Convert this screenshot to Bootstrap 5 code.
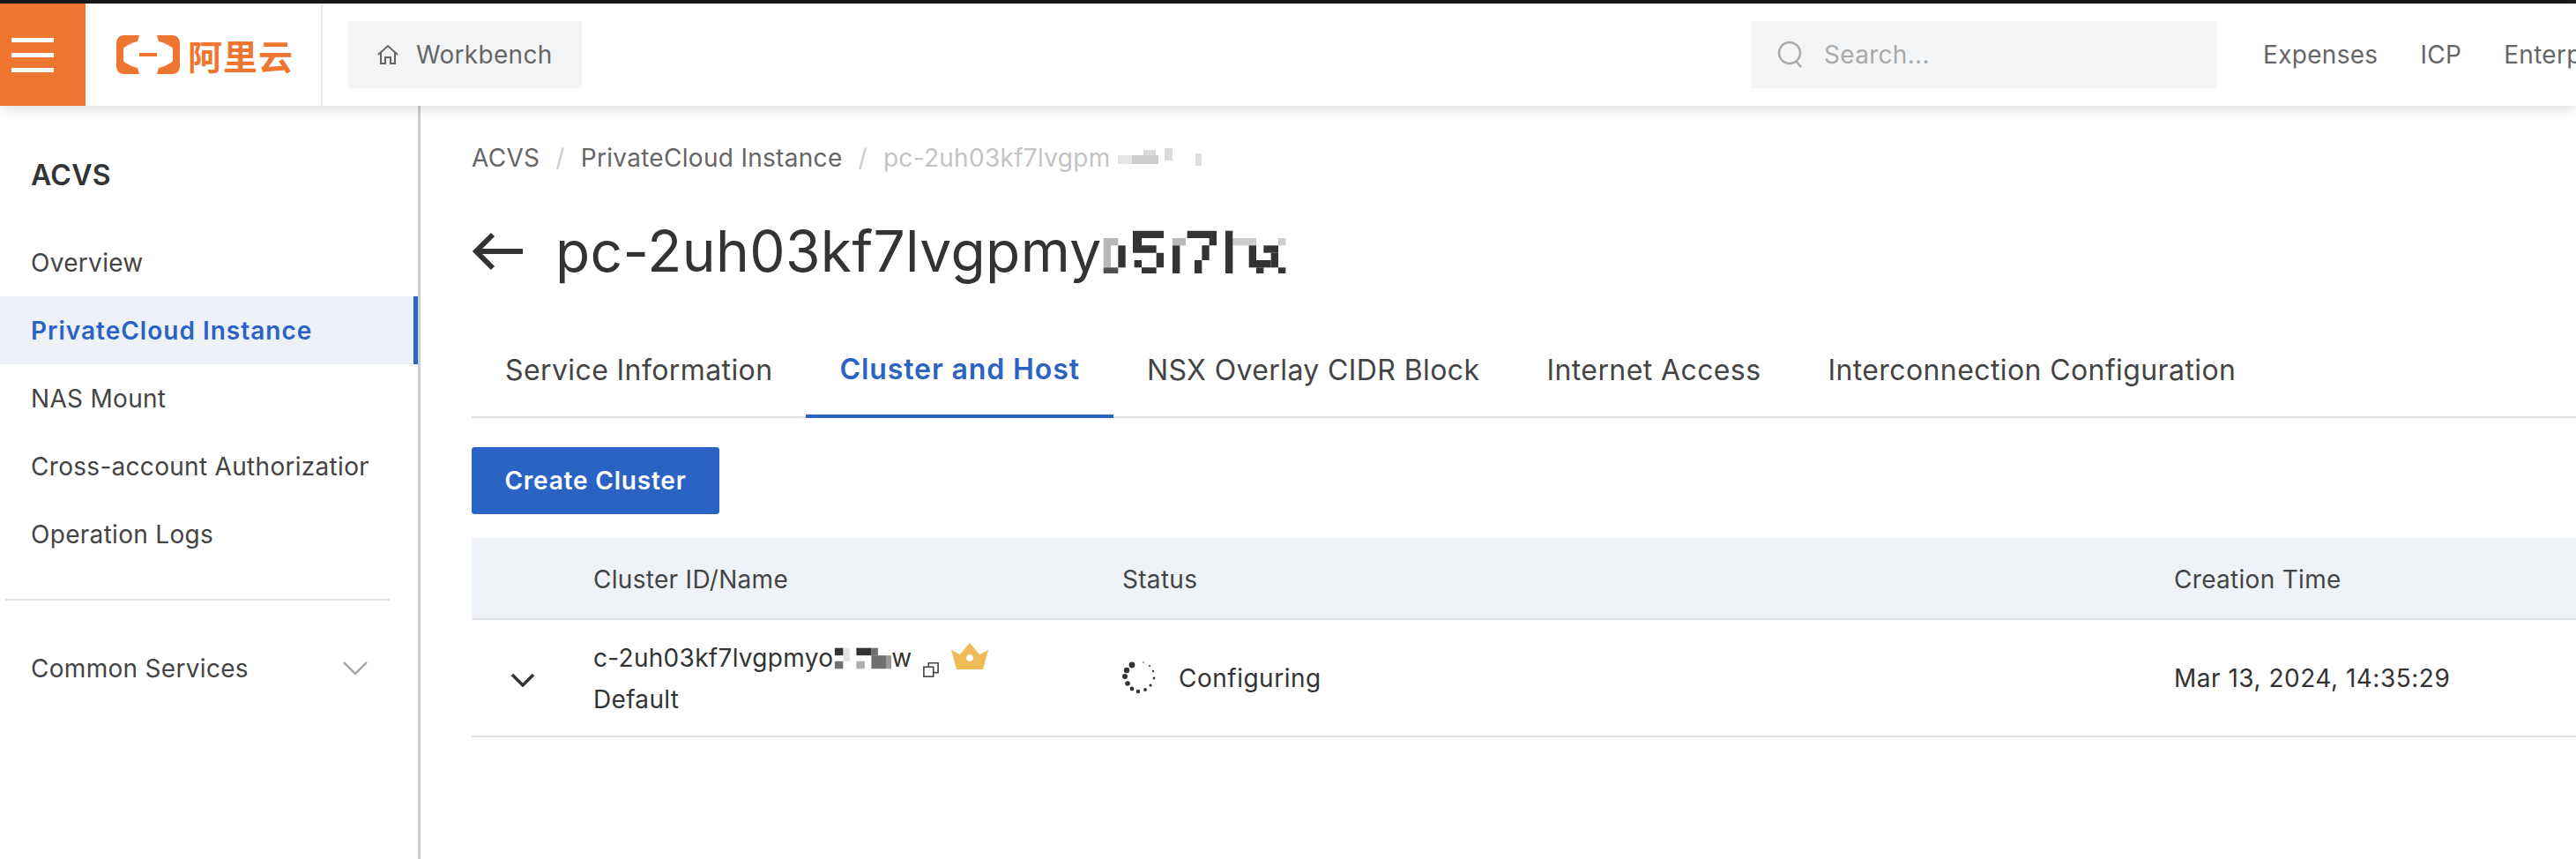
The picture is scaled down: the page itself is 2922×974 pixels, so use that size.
<!DOCTYPE html>
<html lang="en">
<head>
<meta charset="UTF-8">
<title>ACVS PrivateCloud Instance</title>
<link href="https://cdn.jsdelivr.net/npm/bootstrap@5.3.0/dist/css/bootstrap.min.css" rel="stylesheet">
<style>
    html, body { height: 100%; }
    body { font-family: Inter, Roboto, "Liberation Sans", sans-serif; color: #333; background: #fff; overflow: hidden; letter-spacing: .3px; }
    .top-strip { height: 4px; background: #1a1a1a; }
    .top-bar { height: 116px; background: #fff; box-shadow: 0 2px 14px rgba(0,0,0,.16); position: relative; z-index: 2; overflow: hidden; }
    .menu-box { width: 97px; flex: none; background: #ef7630; gap: 12px; padding-left: 13px; }
    .menu-box i { display: block; width: 48px; height: 5px; background: #fff; }
    .logo-box { width: 269px; flex: none; padding-left: 35px; border-right: 2px solid #e8eaec; gap: 9px; }
    .logo-text { font-family: "Noto Sans CJK SC", sans-serif; font-size: 39px; font-weight: 700; color: #ef7630; line-height: 1; letter-spacing: 1px; }
    .bench-btn { width: 265px; height: 76px; margin-left: 29px; background: #f3f4f6; border-radius: 3px; color: #666; font-size: 28px; padding-left: 32px; gap: 19px; }
    .search-box { width: 528px; height: 76px; background: #f4f5f7; color: #aaa; font-size: 28px; padding-left: 29px; gap: 23px; margin-left: auto; }
    .top-links { gap: 48px; padding-left: 52px; font-size: 28px; color: #666; white-space: nowrap; flex: 0 0 407px; overflow: hidden; }
    .page-row { height: 854px; }
    .side-nav { width: 477px; flex: none; border-right: 3px solid #c9ced3; }
    .side-title { font-size: 32px; font-weight: 600; padding: 60px 0 0 35px; line-height: 38px; height: 139px; }
    .side-item { height: 77px; padding-left: 35px; font-size: 28px; color: #444; white-space: nowrap; padding-right: 56px; }
    .side-item.on { background: #eef1f7; color: #2a63c4; font-weight: 600; border-right: 5px solid #2a63c4; letter-spacing: 1px; }
    .side-clip { overflow: hidden; min-width: 0; }
    .side-rule { height: 2px; margin: 35px 32px 38px 6px; background: #dfe2e5; }
    .main-pane { flex: 1; padding-left: 58px; min-width: 0; }
    .crumbs { font-size: 28px; margin: 0; padding-top: 38px; height: 90px; --bs-breadcrumb-divider-color: #ccc; --bs-breadcrumb-item-padding-x: 18px; color: #666; }
    .crumbs .breadcrumb-item { color: #666; }
    .crumbs .breadcrumb-item.active { color: #c4c4c4; }
    .head-row { height: 86px; gap: 37px; font-size: 64px; color: #333; line-height: 1; margin-top: 32px; margin-bottom: 40px; letter-spacing: .4px; }
    .tab-strip { height: 106px; border-bottom: 2px solid #dfe2e5; --bs-nav-tabs-border-width: 0; font-size: 32px; letter-spacing: .4px; }
    .tab-strip .nav-link { color: #444; padding: 0 38px; height: 104px; display: flex; align-items: center; border: 0; border-radius: 0; }
    .tab-strip .nav-link.active { color: #2a63c4; font-weight: 600; border-bottom: 4px solid #2a63c4; height: 106px; letter-spacing: .9px; }
    .make-btn { width: 281px; height: 76px; margin: 33px 0 27px; --bs-btn-bg: #2a63c4; --bs-btn-border-color: #2a63c4; --bs-btn-border-radius: 3px; font-size: 28px; font-weight: 600; letter-spacing: .8px; }
    .cluster-table { table-layout: fixed; width: 2387px; margin: 0; font-size: 28px; --bs-table-color: #333; }
    .cluster-table th { background: #eff2f6; font-weight: 400; height: 92px; vertical-align: middle; padding: 3px 0 0; border-bottom: 2px solid #dfe2e5; color: #444; }
    .cluster-table td { height: 133px; vertical-align: middle; padding: 0; border-bottom: 2px solid #dfe2e5; letter-spacing: .5px; }
    .cluster-table td.cluster-cell { line-height: 47px; padding-top: 2px; letter-spacing: .3px; }
    .chev-mark { margin-left: 44px; }
    .copy-mark { margin-left: 12px; margin-bottom: 2px; }
    .crown-mark { margin-left: 14px; margin-bottom: 4px; }
    .mosaic { display: inline-block; vertical-align: middle; }
</style>
</head>
<body>
<div class="top-strip"></div>
<div class="top-bar d-flex">
    <div class="menu-box d-flex flex-column justify-content-center"><i></i><i></i><i></i></div>
    <div class="logo-box d-flex align-items-center">
        <svg width="72" height="44" viewBox="0 0 72 44" fill="#ef7630">
            <path d="M26 0H9C3 0 0 4 0 9V35C0 40 3 44 9 44H26L24 37C18 36 12 32 10 31C8 30 8 28 8 27V17C8 16 8 14 10 13C12 12 18 8 24 7Z"/>
            <path d="M46 0H63C69 0 72 4 72 9V35C72 40 69 44 63 44H46L48 37C54 36 60 32 62 31C64 30 64 28 64 27V17C64 16 64 14 62 13C60 12 54 8 48 7Z"/>
            <rect x="26" y="20" width="20" height="4"/>
        </svg>
        <span class="logo-text">阿里云</span>
    </div>
    <div class="d-flex align-items-center flex-grow-1">
        <div class="bench-btn d-flex align-items-center">
            <svg width="26" height="26" viewBox="0 0 26 26" fill="none" stroke="#666" stroke-width="2"><path d="M2 13L13 3L24 13M5 11V23H10V16H16V23H21V11"/></svg>
            <span>Workbench</span>
        </div>
        <div class="search-box d-flex align-items-center">
            <svg width="30" height="32" viewBox="0 0 30 32" fill="none" stroke="#aaa" stroke-width="2.5"><circle cx="14" cy="14" r="12"/><path d="M21 23L27 30"/></svg>
            <span>Search...</span>
        </div>
        <div class="top-links d-flex align-items-center"><span>Expenses</span><span>ICP</span><span>Enterprise</span></div>
    </div>
</div>
<div class="page-row d-flex">
    <nav class="side-nav">
        <div class="side-title">ACVS</div>
        <div class="side-item d-flex align-items-center">Overview</div>
        <div class="side-item on d-flex align-items-center">PrivateCloud Instance</div>
        <div class="side-item d-flex align-items-center">NAS Mount</div>
        <div class="side-item d-flex align-items-center"><span class="side-clip">Cross-account Authorization</span></div>
        <div class="side-item d-flex align-items-center">Operation Logs</div>
        <div class="side-rule"></div>
        <div class="side-item d-flex align-items-center justify-content-between">Common Services
            <svg width="30" height="18" viewBox="0 0 30 18" fill="none" stroke="#aaa" stroke-width="2.5"><path d="M2 2L15 15L28 2"/></svg>
        </div>
    </nav>
    <main class="main-pane">
        <ol class="breadcrumb crumbs">
            <li class="breadcrumb-item">ACVS</li>
            <li class="breadcrumb-item">PrivateCloud Instance</li>
            <li class="breadcrumb-item active">pc-2uh03kf7lvgpm<svg class="mosaic" width="105" height="26" viewBox="0 0 105 26" fill="#ccc"><rect x="9" y="8" width="16" height="10" opacity=".5"/><rect x="25" y="8" width="30" height="10"/><rect x="38" y="2" width="14" height="6" opacity=".7"/><rect x="62" y="0" width="9" height="14" opacity=".7"/><rect x="97" y="6" width="7" height="14" opacity=".6"/></svg></li>
        </ol>
        <div class="head-row d-flex align-items-center">
            <svg width="58" height="44" viewBox="0 0 58 44" fill="none" stroke="#333" stroke-width="6"><path d="M58 22H5M24 3L5 22L24 41"/></svg>
            <div class="d-flex align-items-center">
                <span>pc-2uh03kf7lvgpmy</span>
                <svg width="210" height="50" viewBox="60 10 630 150" fill="#333">
                    <path opacity=".35" d="M65 40H115V65H90V140H65Z"/><rect x="115" y="65" width="25" height="75"/><rect x="65" y="140" width="50" height="20" opacity=".85"/>
                    <path d="M165 15H270V40H195V65H245V90H165ZM245 90H270V140H245ZM170 115H195V140H170ZM195 140H245V160H195Z"/>
                    <rect x="300" y="65" width="25" height="95"/><rect x="300" y="40" width="45" height="25" opacity=".35"/>
                    <path d="M350 15H450V65H425V40H350ZM400 65H425V115H400ZM375 115H400V160H375Z"/>
                    <rect x="480" y="15" width="25" height="145"/>
                    <rect x="505" y="40" width="80" height="25" opacity=".25"/><rect x="560" y="65" width="25" height="75"/><rect x="585" y="140" width="25" height="20"/><rect x="610" y="65" width="50" height="25"/><rect x="635" y="90" width="25" height="50"/><rect x="585" y="115" width="50" height="25"/><rect x="660" y="140" width="25" height="20"/><rect x="660" y="40" width="25" height="25" opacity=".25"/>
                </svg>
            </div>
        </div>
        <ul class="nav nav-tabs tab-strip">
            <li class="nav-item"><a class="nav-link" href="#">Service Information</a></li>
            <li class="nav-item"><a class="nav-link active" href="#">Cluster and Host</a></li>
            <li class="nav-item"><a class="nav-link" href="#">NSX Overlay CIDR Block</a></li>
            <li class="nav-item"><a class="nav-link" href="#">Internet Access</a></li>
            <li class="nav-item"><a class="nav-link" href="#">Interconnection Configuration</a></li>
        </ul>
        <button class="btn btn-primary make-btn d-block" type="button">Create Cluster</button>
        <table class="table cluster-table">
            <colgroup><col style="width:138px"><col style="width:600px"><col style="width:1193px"><col></colgroup>
            <thead><tr><th></th><th>Cluster ID/Name</th><th>Status</th><th>Creation Time</th></tr></thead>
            <tbody><tr>
                <td><svg class="chev-mark" width="28" height="16" viewBox="0 0 28 16" fill="none" stroke="#333" stroke-width="3.5"><path d="M2 2L14 14L26 2"/></svg></td>
                <td class="cluster-cell">
                    <div class="d-flex align-items-center">c-2uh03kf7lvgpmyo<svg width="66" height="28" viewBox="0 0 70 28" fill="#333"><rect x="2" y="2" width="10" height="9"/><rect x="2" y="18" width="10" height="9" opacity=".7"/><rect x="12" y="2" width="8" height="16" opacity=".15"/><rect x="28" y="2" width="18" height="9"/><rect x="28" y="18" width="10" height="9" opacity=".4"/><rect x="46" y="2" width="8" height="9" opacity=".7"/><rect x="46" y="11" width="18" height="16" opacity=".7"/><rect x="64" y="11" width="6" height="16" opacity=".5"/></svg><span>w</span>
                        <svg class="copy-mark align-self-end" width="18" height="18" viewBox="0 0 20 20" fill="none" stroke="#444" stroke-width="1.8"><rect x="1" y="7" width="12" height="12"/><path d="M7 7V2H19V14H13"/></svg>
                        <svg class="crown-mark" width="42" height="30" viewBox="0 0 42 30" fill="#eebb55"><path fill-rule="evenodd" d="M0 8L10 13L21 0L32 13L42 8L36 30H6ZM21 13a4 4 0 1 0 .01 0Z"/></svg>
                    </div>
                    <div>Default</div>
                </td>
                <td>
                    <div class="d-flex align-items-center gap-4">
                        <svg width="40" height="40" viewBox="0 0 40 40" fill="#333"><circle cx="11" cy="5" r="3.4"/><circle cx="5" cy="11" r="3.2"/><circle cx="3" cy="18" r="3"/><circle cx="6" cy="26" r="2.8"/><circle cx="11" cy="32" r="2.4"/><circle cx="18" cy="35" r="2.2"/><circle cx="26" cy="33" r="1.9"/><circle cx="32" cy="28" r="1.6"/><circle cx="36" cy="20" r="1.4"/><circle cx="35" cy="12" r="1.2"/><circle cx="31" cy="6" r="1"/><circle cx="24" cy="2" r=".8"/></svg>
                        <span>Configuring</span>
                    </div>
                </td>
                <td>Mar 13, 2024, 14:35:29</td>
            </tr></tbody>
        </table>
    </main>
</div>
<script src="https://cdn.jsdelivr.net/npm/bootstrap@5.3.0/dist/js/bootstrap.bundle.min.js"></script>
</body>
</html>
